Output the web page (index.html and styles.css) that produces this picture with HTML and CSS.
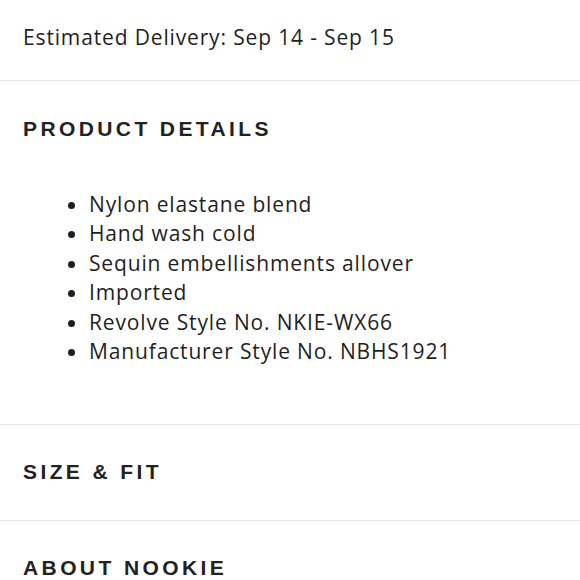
FILE: index.html
```html
<!DOCTYPE html>
<html>
<head>
<meta charset="utf-8">
<link rel="stylesheet" href="styles.css">
</head>
<body>
<div class="page">
  <div class="delivery">Estimated Delivery: Sep 14 - Sep 15</div>
  <section class="panel panel-open">
    <h2 class="panel-title">PRODUCT DETAILS</h2>
    <ul class="details">
      <li>Nylon elastane blend</li>
      <li>Hand wash cold</li>
      <li>Sequin embellishments allover</li>
      <li>Imported</li>
      <li>Revolve Style No. NKIE-WX66</li>
      <li>Manufacturer Style No. NBHS1921</li>
    </ul>
  </section>
  <section class="panel">
    <h2 class="panel-title">SIZE &amp; FIT</h2>
  </section>
  <section class="panel panel-last">
    <h2 class="panel-title">ABOUT NOOKIE</h2>
  </section>
</div>
</body>
</html>
```

FILE: styles.css
```css
html, body {
  margin: 0;
  padding: 0;
  background: #ffffff;
}
.page {
  font-family: "Open Sans", "Noto Sans", sans-serif;
  color: #1f1f1f;
  width: 580px;
  height: 580px;
  overflow: hidden;
}
.delivery {
  padding: 23px 23px 29px;
  font-size: 21px;
  line-height: 28px;
  letter-spacing: 0.85px;
  border-bottom: 1px solid #e6e6e6;
}
.panel {
  padding: 35px 23px 36px;
  border-bottom: 1px solid #e6e6e6;
}
.panel-open {
  padding-top: 36px;
  padding-bottom: 58px;
}
.panel-last {
  border-bottom: none;
}
.panel-title {
  margin: 0;
  font-family: "Liberation Sans", Arial, sans-serif;
  font-weight: 700;
  font-size: 21px;
  line-height: 24px;
  letter-spacing: 3.4px;
  color: #222222;
}
.details {
  margin: 49px 0 0;
  padding: 0 0 0 66px;
  font-size: 21px;
  line-height: 29.4px;
  letter-spacing: 0.85px;
}
```
